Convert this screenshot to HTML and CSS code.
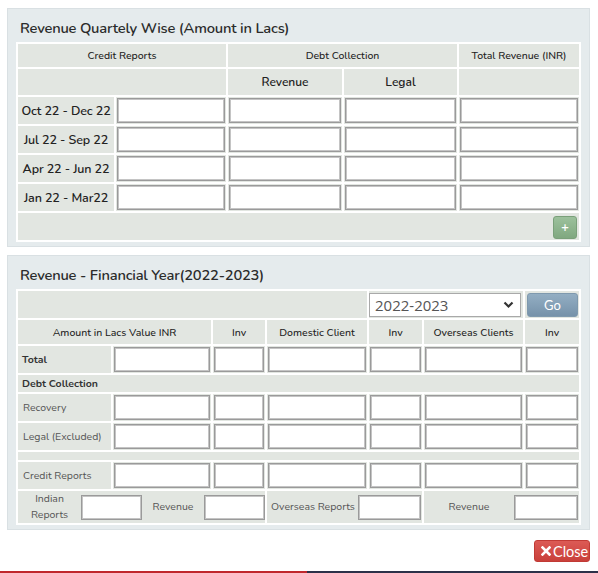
FILE: index.html
```html
<!DOCTYPE html>
<html>
<head>
<meta charset="utf-8">
<link rel="stylesheet" href="styles.css">
</head>
<body>
<div class="wrap">
  <section class="panel">
    <h4 class="panel-title">Revenue Quartely Wise (Amount in Lacs)</h4>
    <table class="grid">
      <colgroup><col class="w96"><col class="w110"><col class="w114"><col class="w113"><col class="w120"></colgroup>
      <tr class="r23"><th colspan="2" class="hs">Credit Reports</th><th colspan="2" class="hs">Debt Collection</th><th class="hs">Total Revenue (INR)</th></tr>
      <tr class="r26"><th colspan="2"></th><th class="hl">Revenue</th><th class="hl">Legal</th><th></th></tr>
      <tr class="r27"><td class="ql">Oct 22 - Dec 22</td><td class="in"><input></td><td class="in"><input></td><td class="in"><input></td><td class="in"><input></td></tr>
      <tr class="r27"><td class="ql">Jul 22 - Sep 22</td><td class="in"><input></td><td class="in"><input></td><td class="in"><input></td><td class="in"><input></td></tr>
      <tr class="r27"><td class="ql">Apr 22 - Jun 22</td><td class="in"><input></td><td class="in"><input></td><td class="in"><input></td><td class="in"><input></td></tr>
      <tr class="r27"><td class="ql">Jan 22 - Mar22</td><td class="in"><input></td><td class="in"><input></td><td class="in"><input></td><td class="in"><input></td></tr>
      <tr class="r27"><td colspan="5" class="foot"><button class="add">+</button></td></tr>
    </table>
  </section>

  <section class="panel panel2">
    <h4 class="panel-title">Revenue - Financial Year(2022-2023)</h4>
    <table class="grid">
      <colgroup><col class="w93"><col class="w98"><col class="w52"><col class="w100"><col class="w53"><col class="w99"><col class="w54"></colgroup>
      <tr class="r27"><td colspan="4"></td><td colspan="2" class="selcell"><div class="select"><span>2022-2023</span><svg class="chev" width="11" height="8" viewBox="0 0 11 8"><path d="M1.5 1.5 L5.5 5.5 L9.5 1.5" fill="none" stroke="#333" stroke-width="2.2"/></svg></div></td><td class="gocell"><button class="go">Go</button></td></tr>
      <tr class="r24"><th colspan="2" class="hs">Amount in Lacs Value INR</th><th class="hs">Inv</th><th class="hs">Domestic Client</th><th class="hs">Inv</th><th class="hs">Overseas Clients</th><th class="hs">Inv</th></tr>
      <tr class="r27"><td class="fl b">Total</td><td class="in"><input></td><td class="in"><input></td><td class="in"><input></td><td class="in"><input></td><td class="in"><input></td><td class="in"><input></td></tr>
      <tr class="r17"><td colspan="7" class="fl b">Debt Collection</td></tr>
      <tr class="r27"><td class="fl">Recovery</td><td class="in"><input></td><td class="in"><input></td><td class="in"><input></td><td class="in"><input></td><td class="in"><input></td><td class="in"><input></td></tr>
      <tr class="r27"><td class="fl">Legal (Excluded)</td><td class="in"><input></td><td class="in"><input></td><td class="in"><input></td><td class="in"><input></td><td class="in"><input></td><td class="in"><input></td></tr>
      <tr class="r8"><td colspan="7"></td></tr>
      <tr class="r27"><td class="fl">Credit Reports</td><td class="in"><input></td><td class="in"><input></td><td class="in"><input></td><td class="in"><input></td><td class="in"><input></td><td class="in"><input></td></tr>
      <tr class="r32">
        <td colspan="3"><div class="pair p1"><span class="plab ind">Indian<br>Reports</span><input class="pin w61"><span class="plab rev1">Revenue</span><input class="pin w61"></div></td>
        <td colspan="2"><div class="pair p2"><span class="plab ovs">Overseas Reports</span><input class="pin w63"></div></td>
        <td colspan="2"><div class="pair p3"><span class="plab rev2">Revenue</span><input class="pin w64"></div></td>
      </tr>
    </table>
  </section>

  <div class="actions">
    <button class="close"><svg width="10" height="10" viewBox="0 0 10 10"><path d="M1.5 1.5 L8.5 8.5 M8.5 1.5 L1.5 8.5" stroke="#fff" stroke-width="2.6" stroke-linecap="square"/></svg>Close</button>
  </div>
</div>
<div class="bottombar"></div>
</body>
</html>
```

FILE: styles.css
```css
* { box-sizing: border-box; }
html, body { margin: 0; padding: 0; background: #fff; }
body {
  font-family: "Nunito", "Lato", "Open Sans", sans-serif;
  color: #333;
  width: 598px;
  height: 573px;
  overflow: hidden;
  position: relative;
}
.wrap { padding: 8px 8px 0 7px; }

.panel {
  background: #e5ebed;
  border: 1px solid #d9e0e3;
  padding: 0 8px 4px 8px;
}
.panel2 { margin-top: 8px; }

.panel-title {
  margin: 0;
  padding: 9px 4px 4px;
  height: 33px;
  line-height: 20px;
  font-size: 14.7px;
  font-weight: 600;
  letter-spacing: -0.2px;
  color: #2b2b2b;
}

.grid {
  width: 565px;
  table-layout: fixed;
  border-collapse: separate;
  border-spacing: 2px;
  background: #fff;
}
.grid th, .grid td {
  background: #e2e6e1;
  padding: 0;
  vertical-align: middle;
}
.w96 { width: 96px; } .w110 { width: 110px; } .w114 { width: 114px; } .w113 { width: 113px; } .w120 { width: 120px; }
.w93 { width: 93px; } .w98 { width: 98px; } .w52 { width: 52px; } .w100 { width: 100px; } .w53 { width: 53px; } .w99 { width: 99px; } .w54 { width: 54px; }

.r23 { height: 23px; } .r24 { height: 24px; } .r26 { height: 26px; } .r27 { height: 27px; }
.r17 { height: 17px; } .r8 { height: 8px; } .r32 { height: 32px; }

.grid .hs { font-size: 10.5px; font-weight: 500; text-align: center; color: #222; }
.grid .hl { font-size: 12px; font-weight: 600; text-align: center; color: #222; }
.grid .ql { font-size: 12.5px; font-weight: 600; text-align: center; color: #222; letter-spacing: -0.1px; }
.grid .fl { font-size: 10.5px; color: #555; padding-left: 5px; text-align: left; }
.grid .fl.b { font-weight: 700; color: #333; padding-left: 4px; }

.grid .in { padding: 1px; }
input {
  display: block;
  width: 100%;
  height: 25px;
  margin: 0;
  border: 1px solid #9a9a9a;
  box-shadow: inset 0 0 0 1px #c4c4c4;
  background: #fff;
  font: inherit;
  padding: 0 4px;
}

.grid .foot { text-align: right; padding-right: 2px; }
.add {
  width: 24px;
  height: 23px;
  margin-top: 1px;
  border: 1px solid #7aa07a;
  border-radius: 3px;
  background: linear-gradient(#9cc19c, #80a880);
  color: #fff;
  font: 600 13px "Lato", sans-serif;
  padding: 0;
  line-height: 20px;
}

.select {
  width: 152px;
  height: 24px;
  background: #fff;
  border: 1px solid #a9a9a9;
  display: flex;
  align-items: center;
  justify-content: space-between;
  padding: 0 4px 0 5px;
  font: 400 15px "Open Sans", sans-serif;
  color: #555;
}
.chev { margin-right: 2px; }
.grid .gocell { padding: 0 1px 0 2px; }
.go {
  display: block;
  width: 51px;
  height: 24px;
  border: 1px solid #7f99ae;
  border-radius: 3px;
  background: linear-gradient(#93aec3, #7692aa);
  color: #fff;
  font: 400 13px "Lato", sans-serif;
  padding: 0;
}

.pair { display: flex; align-items: center; height: 32px; font-size: 10.5px; color: #555; }
.plab { text-align: center; line-height: 16px; }
.ind { width: 63px; }
.rev1 { width: 62px; }
.pin { height: 25px; }
.w61 { width: 61px; }
.w63 { width: 63px; }
.w64 { width: 64px; }
.p2 .ovs { width: 90px; }
.p2 { justify-content: flex-end; padding-right: 1px; }
.p3 { justify-content: space-between; }
.rev2 { width: 90px; }
.p3 .pin { margin-right: 1px; }

.actions { display: flex; justify-content: flex-end; margin-top: 10px; }
.close {
  display: flex;
  align-items: center;
  gap: 2px;
  width: 56px;
  height: 22px;
  padding: 0 0 0 6px;
  border: 1px solid #c13a35;
  border-radius: 3px;
  background: linear-gradient(#dc5a55, #c9403b);
  color: #fff;
  font: 400 14.5px "Lato", sans-serif;
}

.bottombar {
  position: absolute;
  left: 0; right: 0; top: 571px;
  height: 2px;
  background: linear-gradient(to right, #c0282d 0, #c0282d 307px, #2c3149 307px);
}
```
